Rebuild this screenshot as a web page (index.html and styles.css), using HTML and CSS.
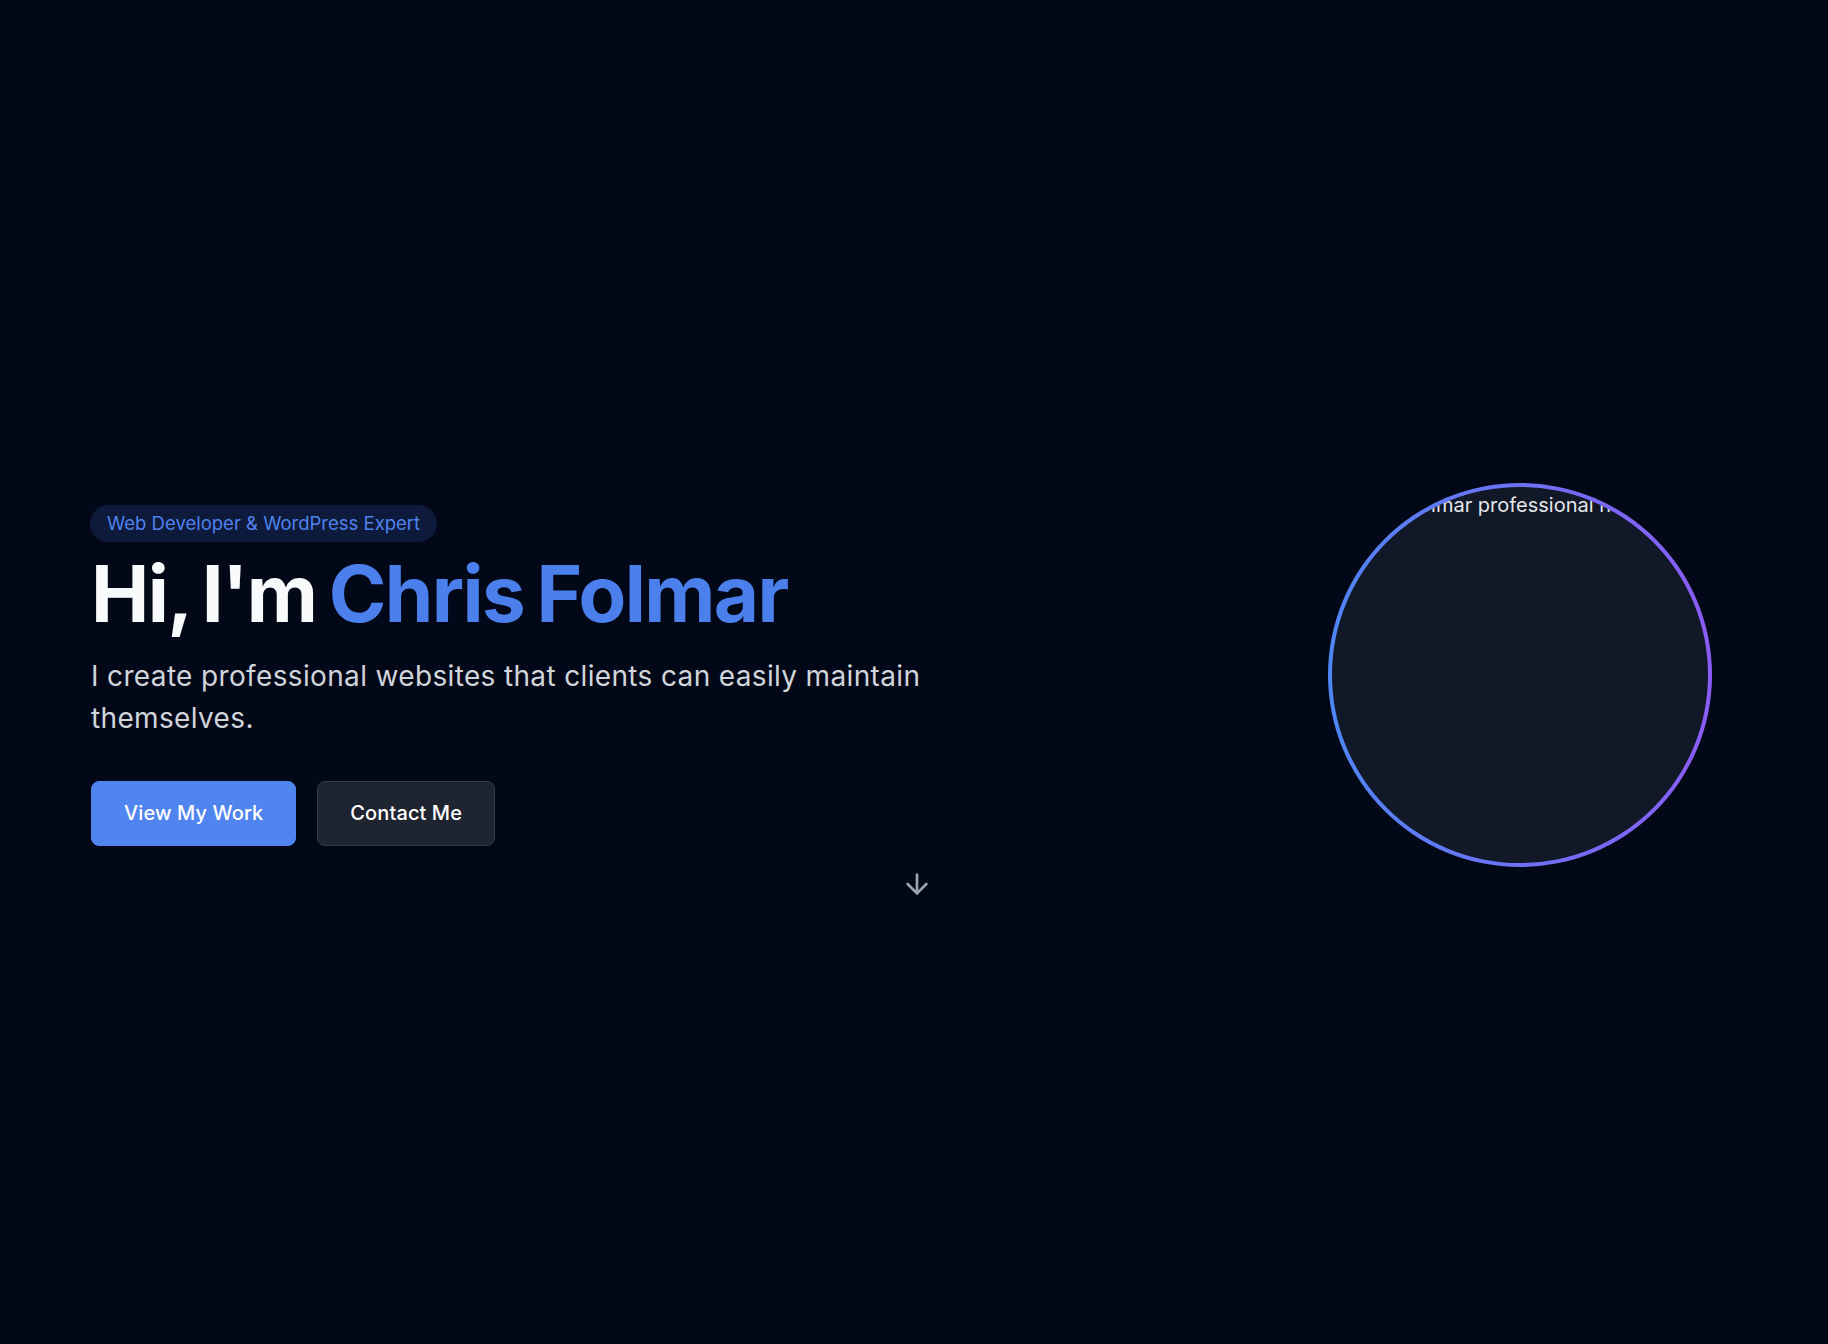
FILE: index.html
```html
<!DOCTYPE html>
<html lang="en">
<head>
<meta charset="utf-8">
<title>Chris Folmar</title>
<link rel="stylesheet" href="styles.css">
</head>
<body>
<main class="hero">
  <div class="hero-inner">
    <div class="intro">
      <span class="badge">Web Developer &amp; WordPress Expert</span>
      <h1 class="title">Hi, I'm <span class="accent">Chris Folmar</span></h1>
      <p class="lead">I create professional websites that clients can easily maintain themselves.</p>
      <div class="actions">
        <a class="btn btn-primary" href="#work">View My Work</a>
        <a class="btn btn-secondary" href="#contact">Contact Me</a>
      </div>
    </div>
    <div class="portrait">
      <div class="portrait-inner">
        <span class="portrait-alt">Chris Folmar professional headshot</span>
      </div>
    </div>
  </div>
  <a class="scroll" href="#about" aria-label="Scroll down">
    <svg width="32" height="32" viewBox="0 0 24 24" fill="none" stroke="currentColor" stroke-width="2" stroke-linecap="round" stroke-linejoin="round"><path d="M12 5v14"/><path d="m19 12-7 7-7-7"/></svg>
  </a>
</main>
</body>
</html>
```

FILE: styles.css
```css
* { box-sizing: border-box; }
html, body { margin: 0; padding: 0; }
body {
  background: #020817;
  font-family: Inter, "Noto Sans", "Liberation Sans", sans-serif;
  color: #f9fafb;
}
.hero {
  position: relative;
  min-height: 100vh;
  display: flex;
  align-items: center;
  padding: 6px 116px 0 91px;
}
.hero-inner {
  width: 100%;
  display: flex;
  justify-content: space-between;
  align-items: center;
}
.intro {
  display: flex;
  flex-direction: column;
  align-items: flex-start;
}
.badge {
  display: inline-block;
  margin-left: -1px;
  padding: 7.5px 17px;
  font-size: 18.5px;
  line-height: 22px;
  color: #4f82ee;
  background: #0e1a3b;
  border-radius: 999px;
}
.title {
  margin: 12px 0 0;
  font-size: 78px;
  line-height: 80px;
  font-weight: 700;
  letter-spacing: -1.6px;
  word-spacing: -4.5px;
  color: #f9fafb;
}
.accent { color: #4b80ec; }
.lead {
  margin: 21px 0 0;
  max-width: 880px;
  font-size: 28px;
  line-height: 42px;
  letter-spacing: 0.35px;
  color: #d1d5db;
}
.actions {
  margin-top: 42px;
  display: flex;
  gap: 21px;
}
.btn {
  display: inline-block;
  padding: 17.5px 32px;
  font-size: 20px;
  line-height: 28px;
  font-weight: 500;
  letter-spacing: 0.1px;
  border-radius: 8px;
  text-decoration: none;
  color: #ffffff;
  border: 1px solid transparent;
}
.btn-primary { background: #5085ef; border-color: #5085ef; }
.btn-secondary { background: #1f2431; border-color: #343a48; }
.portrait {
  width: 384px;
  height: 384px;
  padding: 4px;
  border-radius: 50%;
  background: linear-gradient(90deg, #4f86f5, #8b5cf6);
  flex-shrink: 0;
}
.portrait-inner {
  width: 100%;
  height: 100%;
  border-radius: 50%;
  background: #111827;
  overflow: hidden;
  display: flex;
  justify-content: center;
  align-items: flex-start;
}
.portrait-alt {
  margin-top: 6px;
  white-space: nowrap;
  font-size: 20px;
  line-height: 24px;
  color: #e5e7eb;
}
.scroll {
  position: absolute;
  top: 868px;
  left: 50%;
  transform: translateX(-13px);
  color: #9ca3af;
  display: block;
  line-height: 0;
}
```
